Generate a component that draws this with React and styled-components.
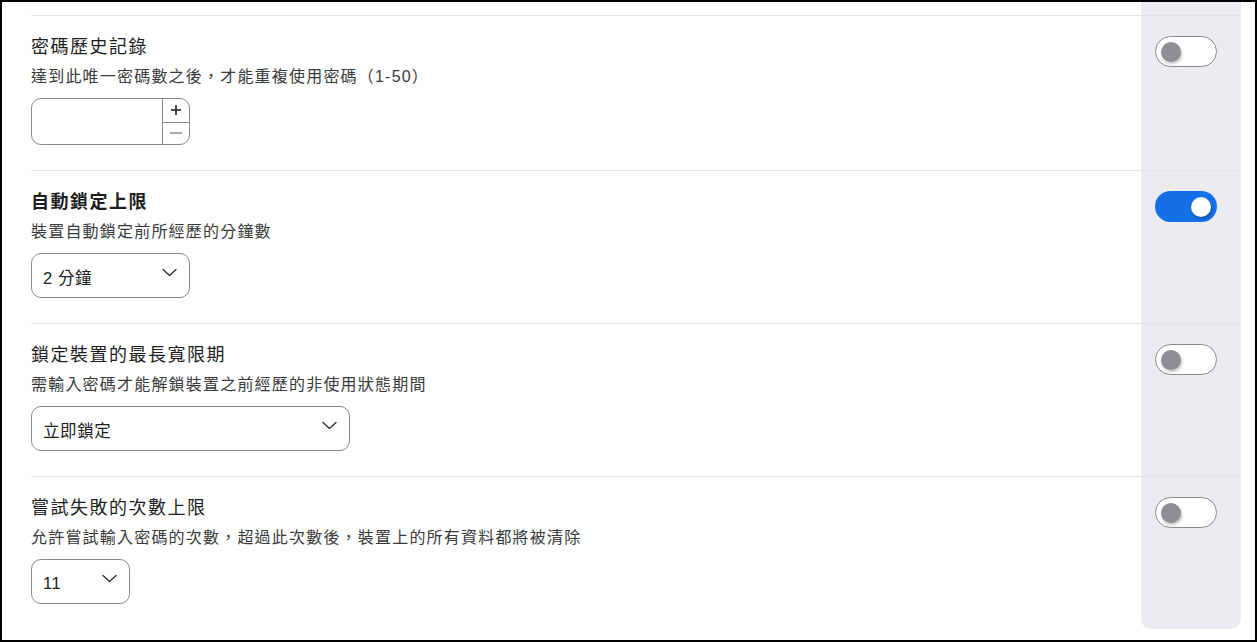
import React from "react";
import styled, { createGlobalStyle } from "styled-components";

const GlobalStyle = createGlobalStyle`
  html, body { margin: 0; padding: 0; background: #fff; }
  body {
    font-family: "Liberation Sans", "Noto Sans CJK TC", sans-serif;
    color: #1d1d1f;
  }
  * { box-sizing: border-box; }
`;

const Frame = styled.div`
  width: 1257px;
  height: 642px;
  border: 2px solid #000;
  overflow: hidden;
  padding: 0 14px 0 29px;
  background: #fff;
`;

const Row = styled.div`
  display: grid;
  grid-template-columns: 1fr 100px;
  border-top: ${(p) => (p.$first ? "none" : "1px solid #e3e3e8")};
`;

const Main = styled.div`
  padding: 19px 0 25px 0;
  display: flex;
  flex-direction: column;
  align-items: flex-start;
`;

const Side = styled.div`
  background: #ebebf0;
  padding: ${(p) => (p.$h ? "0" : "20px 0 0 14px")};
  height: ${(p) => (p.$h ? `${p.$h}px` : "auto")};
  border-radius: ${(p) => (p.$last ? "0 0 10px 10px" : "0")};
`;

const Title = styled.div`
  font-size: 18px;
  line-height: 24px;
  letter-spacing: 1.5px;
  font-weight: ${(p) => (p.$bold ? 700 : 400)};
  color: #1d1d1f;
`;

const Desc = styled.div`
  margin-top: 7px;
  font-size: 16px;
  line-height: 22px;
  letter-spacing: 1.2px;
  color: #3a3a3c;
`;

const Control = styled.div`
  margin-top: 10px;
`;

const NumberBox = styled.div`
  width: 159px;
  height: 47px;
  border: 1px solid #8a8a8e;
  border-radius: 10px;
  display: grid;
  grid-template-columns: 1fr 27px;
  overflow: hidden;
`;

const Stepper = styled.div`
  border-left: 1px solid #8a8a8e;
  display: grid;
  grid-template-rows: 1fr 1fr;
`;

const StepBtn = styled.div`
  display: flex;
  align-items: center;
  justify-content: center;
  border-top: ${(p) => (p.$divider ? "1px solid #8a8a8e" : "none")};
`;

const StepIcon = styled.svg`
  width: 12px;
  height: 12px;
`;

const Select = styled.div`
  width: ${(p) => p.$w}px;
  height: 45px;
  border: 1px solid #8a8a8e;
  border-radius: 10px;
  display: flex;
  align-items: center;
  justify-content: space-between;
  padding: 3px 12px 0 11px;
  font-size: 16.5px;
  letter-spacing: 0.6px;
  color: #1d1d1f;
`;

const Chevron = styled.svg`
  width: 15px;
  height: 9px;
  margin-top: -9px;
`;

const Toggle = styled.div`
  width: 62px;
  height: 31px;
  border-radius: 16px;
  background: ${(p) => (p.$on ? "#1470e8" : "#fff")};
  border: ${(p) => (p.$on ? "none" : "1px solid #8a8a8e")};
  display: flex;
  align-items: center;
  justify-content: ${(p) => (p.$on ? "flex-end" : "flex-start")};
  padding: 0 ${(p) => (p.$on ? "6px" : "5px")};
`;

const Knob = styled.div`
  width: 20px;
  height: 20px;
  border-radius: 50%;
  background: ${(p) => (p.$on ? "#fff" : "#8e8e93")};
  box-shadow: 1px 2px 3px rgba(0, 0, 0, 0.25);
`;

const ChevronIcon = () => (
  <Chevron viewBox="0 0 15 9">
    <path d="M1 1.5 L7.5 7.5 L14 1.5" fill="none" stroke="#2c2c2e" strokeWidth="1.3" strokeLinecap="round" strokeLinejoin="round" />
  </Chevron>
);

const PlusIcon = () => (
  <StepIcon viewBox="0 0 12 12">
    <path d="M6 1 V11 M1 6 H11" stroke="#1d1d1f" strokeWidth="1.6" />
  </StepIcon>
);

const MinusIcon = () => (
  <StepIcon viewBox="0 0 12 12">
    <path d="M0 6 H12" stroke="#8a8a8e" strokeWidth="1.3" />
  </StepIcon>
);

const rows = [
  {
    title: "密碼歷史記錄",
    desc: "達到此唯一密碼數之後，才能重複使用密碼（1-50）",
    kind: "number",
    on: false,
  },
  {
    title: "自動鎖定上限",
    desc: "裝置自動鎖定前所經歷的分鐘數",
    kind: "select",
    value: "2 分鐘",
    w: 159,
    on: true,
    bold: true,
  },
  {
    title: "鎖定裝置的最長寬限期",
    desc: "需輸入密碼才能解鎖裝置之前經歷的非使用狀態期間",
    kind: "select",
    value: "立即鎖定",
    w: 319,
    on: false,
  },
  {
    title: "嘗試失敗的次數上限",
    desc: "允許嘗試輸入密碼的次數，超過此次數後，裝置上的所有資料都將被清除",
    kind: "select",
    value: "11",
    w: 99,
    on: false,
  },
];

export default function App() {
  return (
    <>
      <GlobalStyle />
      <Frame>
        <Row $first>
          <div />
          <Side $h={13} />
        </Row>
        {rows.map((r, i) => (
          <Row key={r.title}>
            <Main>
              <Title $bold={r.bold}>{r.title}</Title>
              <Desc>{r.desc}</Desc>
              <Control>
                {r.kind === "number" ? (
                  <NumberBox>
                    <div />
                    <Stepper>
                      <StepBtn>
                        <PlusIcon />
                      </StepBtn>
                      <StepBtn $divider>
                        <MinusIcon />
                      </StepBtn>
                    </Stepper>
                  </NumberBox>
                ) : (
                  <Select $w={r.w}>
                    <span>{r.value}</span>
                    <ChevronIcon />
                  </Select>
                )}
              </Control>
            </Main>
            <Side $last={i === rows.length - 1}>
              <Toggle $on={r.on}>
                <Knob $on={r.on} />
              </Toggle>
            </Side>
          </Row>
        ))}
      </Frame>
    </>
  );
}
